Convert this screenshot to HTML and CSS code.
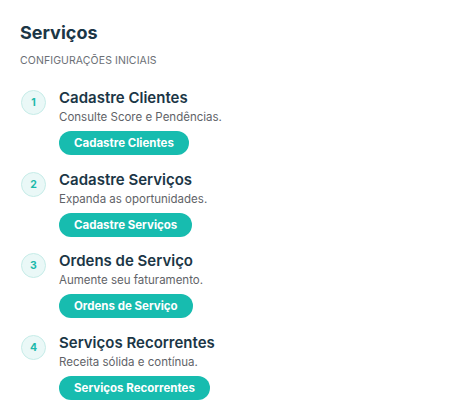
FILE: index.html
```html
<!DOCTYPE html>
<html lang="pt">
<head>
<meta charset="utf-8">
<link rel="stylesheet" href="styles.css">
</head>
<body>
<div class="panel">
  <h1 class="title">Serviços</h1>
  <div class="subtitle">CONFIGURAÇÕES INICIAIS</div>
  <ol class="steps">
    <li class="step">
      <span class="num">1</span>
      <div class="body">
        <div class="step-title">Cadastre Clientes</div>
        <div class="step-desc">Consulte Score e Pendências.</div>
        <button class="btn">Cadastre Clientes</button>
      </div>
    </li>
    <li class="step">
      <span class="num">2</span>
      <div class="body">
        <div class="step-title">Cadastre Serviços</div>
        <div class="step-desc">Expanda as oportunidades.</div>
        <button class="btn">Cadastre Serviços</button>
      </div>
    </li>
    <li class="step">
      <span class="num">3</span>
      <div class="body">
        <div class="step-title">Ordens de Serviço</div>
        <div class="step-desc">Aumente seu faturamento.</div>
        <button class="btn">Ordens de Serviço</button>
      </div>
    </li>
    <li class="step">
      <span class="num">4</span>
      <div class="body">
        <div class="step-title">Serviços Recorrentes</div>
        <div class="step-desc">Receita sólida e contínua.</div>
        <button class="btn">Serviços Recorrentes</button>
      </div>
    </li>
  </ol>
</div>
</body>
</html>
```
FILE: styles.css
```css
* { box-sizing: border-box; }
html, body { margin: 0; padding: 0; background: #fff; }
body { font-family: "Inter", "Open Sans", sans-serif; color: #1d3a4b; }
.panel { padding: 20px 20px 0 20px; }
.title { margin: 0; font-size: 18px; line-height: 26px; font-weight: 700; color: #1b3646; }
.subtitle { margin-top: 8px; font-size: 10.5px; line-height: 14px; color: #6b6f75; letter-spacing: 0.1px; }
.steps { list-style: none; margin: 19px 0 0 0; padding: 0; display: flex; flex-direction: column; gap: 13.5px; }
.step { display: flex; align-items: flex-start; gap: 13px; }
.num { flex: none; margin-top: 3px; margin-left: 1px; width: 25px; height: 25px; border-radius: 50%; background: #eaf8f7; border: 1.5px solid #c6ece8; color: #1bb8aa; font-size: 10.5px; font-weight: 700; display: flex; align-items: center; justify-content: center; }
.body { display: flex; flex-direction: column; align-items: flex-start; }
.step-title { font-size: 15px; line-height: 21px; font-weight: 600; color: #1b3646; }
.step-desc { margin-top: 1px; font-size: 11.5px; line-height: 16px; color: #5f6368; }
.btn { margin-top: 6px; height: 24px; padding: 0 15px; border: 0; border-radius: 12px; background: #17bcaf; color: #fff; font-family: inherit; font-size: 11.5px; font-weight: 700; cursor: pointer; }
```
